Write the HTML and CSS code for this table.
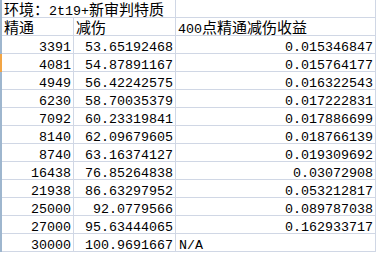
FILE: index.html
```html
<!DOCTYPE html>
<html>
<head>
<meta charset="utf-8">
<link rel="stylesheet" href="styles.css">
</head>
<body>
<div class="sheet">
  <div class="h"></div><div class="c t span2">环境：<span class="n">2t19+</span>新审判特质</div><div class="c"></div>
  <div class="h"></div><div class="c t">精通</div><div class="c t">减伤</div><div class="c t"><span class="n">400</span>点精通减伤收益</div>
  <div class="h"></div><div class="c num">3391</div><div class="c num">53.65192468</div><div class="c num">0.015346847</div>
  <div class="h sel"></div><div class="c num">4081</div><div class="c num">54.87891167</div><div class="c num">0.015764177</div>
  <div class="h"></div><div class="c num">4949</div><div class="c num">56.42242575</div><div class="c num">0.016322543</div>
  <div class="h"></div><div class="c num">6230</div><div class="c num">58.70035379</div><div class="c num">0.017222831</div>
  <div class="h"></div><div class="c num">7092</div><div class="c num">60.23319841</div><div class="c num">0.017886699</div>
  <div class="h"></div><div class="c num">8140</div><div class="c num">62.09679605</div><div class="c num">0.018766139</div>
  <div class="h"></div><div class="c num">8740</div><div class="c num">63.16374127</div><div class="c num">0.019309692</div>
  <div class="h"></div><div class="c num">16438</div><div class="c num">76.85264838</div><div class="c num">0.03072908</div>
  <div class="h"></div><div class="c num">21938</div><div class="c num">86.63297952</div><div class="c num">0.053212817</div>
  <div class="h"></div><div class="c num">25000</div><div class="c num">92.0779566</div><div class="c num">0.089787038</div>
  <div class="h"></div><div class="c num">27000</div><div class="c num">95.63444065</div><div class="c num">0.162933717</div>
  <div class="h"></div><div class="c num">30000</div><div class="c num">100.9691667</div><div class="c numl">N/A</div>
</div>
</body>
</html>
```

FILE: styles.css
```css
html, body {
  margin: 0;
  padding: 0;
  background: #ffffff;
}
.sheet {
  display: grid;
  grid-template-columns: 2px 72px 102px 200px;
  grid-auto-rows: 18px;
  font-family: "Noto Sans CJK SC", sans-serif;
  font-size: 15px;
  color: #000;
}
.h {
  background: #9eb6ce;
}
.h.sel {
  background: #f2a545;
}
.c {
  box-sizing: border-box;
  height: 18px;
  border-right: 1px solid #d0d7e5;
  border-bottom: 1px solid #d0d7e5;
  padding: 0 2px;
  line-height: 17px;
  white-space: nowrap;
  overflow: visible;
}
.span2 {
  grid-column: span 2;
}
.t {
  padding-left: 2px;
}
.n {
  font-family: "Liberation Mono", monospace;
  font-size: 13.33px;
}
.num, .numl {
  font-family: "Liberation Mono", monospace;
  font-size: 13.33px;
  padding-top: 3px;
  text-align: right;
}
.numl {
  text-align: left;
  padding-left: 3px;
}
```
